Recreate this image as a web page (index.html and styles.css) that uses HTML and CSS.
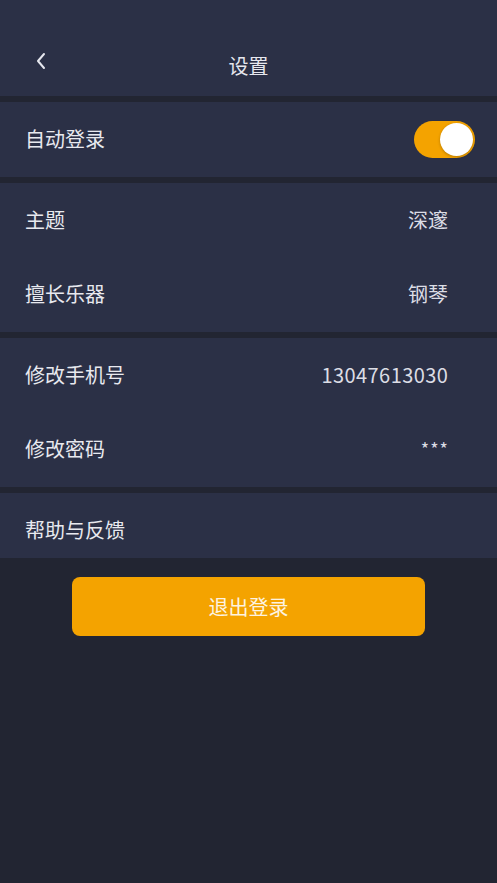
FILE: index.html
```html
<!DOCTYPE html>
<html lang="zh-CN">
<head>
  <meta charset="UTF-8">
  <meta name="viewport" content="width=device-width, initial-scale=1.0">
  <title>设置</title>
  <link rel="stylesheet" href="styles.css">
</head>
<body>
  <div class="page">
    <header class="header">
      <span class="back">
        <svg width="12" height="18" viewBox="0 0 12 18">
          <polyline points="9,2 3,9 9,16" fill="none" stroke="#e6e7ee" stroke-width="2" stroke-linecap="round" stroke-linejoin="round"/>
        </svg>
      </span>
      <h1 class="title">设置</h1>
    </header>

    <section class="group">
      <div class="row">
        <span class="label">自动登录</span>
        <span class="switch on"><span class="knob"></span></span>
      </div>
    </section>

    <section class="group">
      <div class="row">
        <span class="label">主题</span>
        <span class="value">深邃</span>
      </div>
      <div class="row">
        <span class="label">擅长乐器</span>
        <span class="value">钢琴</span>
      </div>
    </section>

    <section class="group">
      <div class="row">
        <span class="label">修改手机号</span>
        <span class="value phone">13047613030</span>
      </div>
      <div class="row">
        <span class="label">修改密码</span>
        <span class="value stars">***</span>
      </div>
    </section>

    <section class="group">
      <div class="row row-last">
        <span class="label">帮助与反馈</span>
      </div>
    </section>

    <div class="actions">
      <button class="logout">退出登录</button>
    </div>
  </div>
</body>
</html>
```

FILE: styles.css
```css
body {
  margin: 0;
  background-color: #222532;
  font-family: "Noto Sans CJK SC", "Noto Sans", sans-serif;
  color: #e6e7ee;
}

.page {
  width: 497px;
  min-height: 883px;
}

.header {
  height: 96px;
  background-color: #2b3046;
  display: flex;
  align-items: center;
  justify-content: center;
  position: relative;
}

.back {
  position: absolute;
  left: 35px;
  top: 51px;
  width: 12px;
  height: 18px;
}

.title {
  margin: 36px 0 0;
  font-size: 20px;
  font-weight: normal;
  line-height: 28px;
}

.group {
  margin-top: 6px;
  background-color: #2b3046;
}

.row {
  height: 74.5px;
  display: flex;
  align-items: center;
  justify-content: space-between;
  padding: 0 49px 0 25px;
  font-size: 20px;
  line-height: 28px;
}

.row-last {
  height: 65px;
  align-items: flex-start;
  padding-top: 23px;
  box-sizing: border-box;
}

.label {
  color: #e8e9ef;
}

.value {
  color: #dcdde5;
}

.phone {
  letter-spacing: 0.45px;
  margin-right: -0.45px;
}

.stars {
  font-size: 18px;
  letter-spacing: 1px;
  margin-right: -1px;
  position: relative;
  top: -1px;
}

.switch {
  width: 61px;
  height: 37px;
  border-radius: 19px;
  background-color: #f4a300;
  margin-right: -27px;
  display: flex;
  align-items: center;
  justify-content: flex-end;
  padding: 0 2px;
  box-sizing: border-box;
}

.knob {
  width: 33px;
  height: 33px;
  border-radius: 50%;
  background-color: #ffffff;
  box-shadow: 0 1px 3px rgba(0, 0, 0, 0.25);
}

.actions {
  display: flex;
  justify-content: center;
  padding-top: 19px;
}

.logout {
  width: 353px;
  height: 59px;
  border: none;
  border-radius: 8px;
  background-color: #f4a300;
  color: #fdf3e1;
  font-family: "Noto Sans CJK SC", "Noto Sans", sans-serif;
  font-size: 20px;
}
```
